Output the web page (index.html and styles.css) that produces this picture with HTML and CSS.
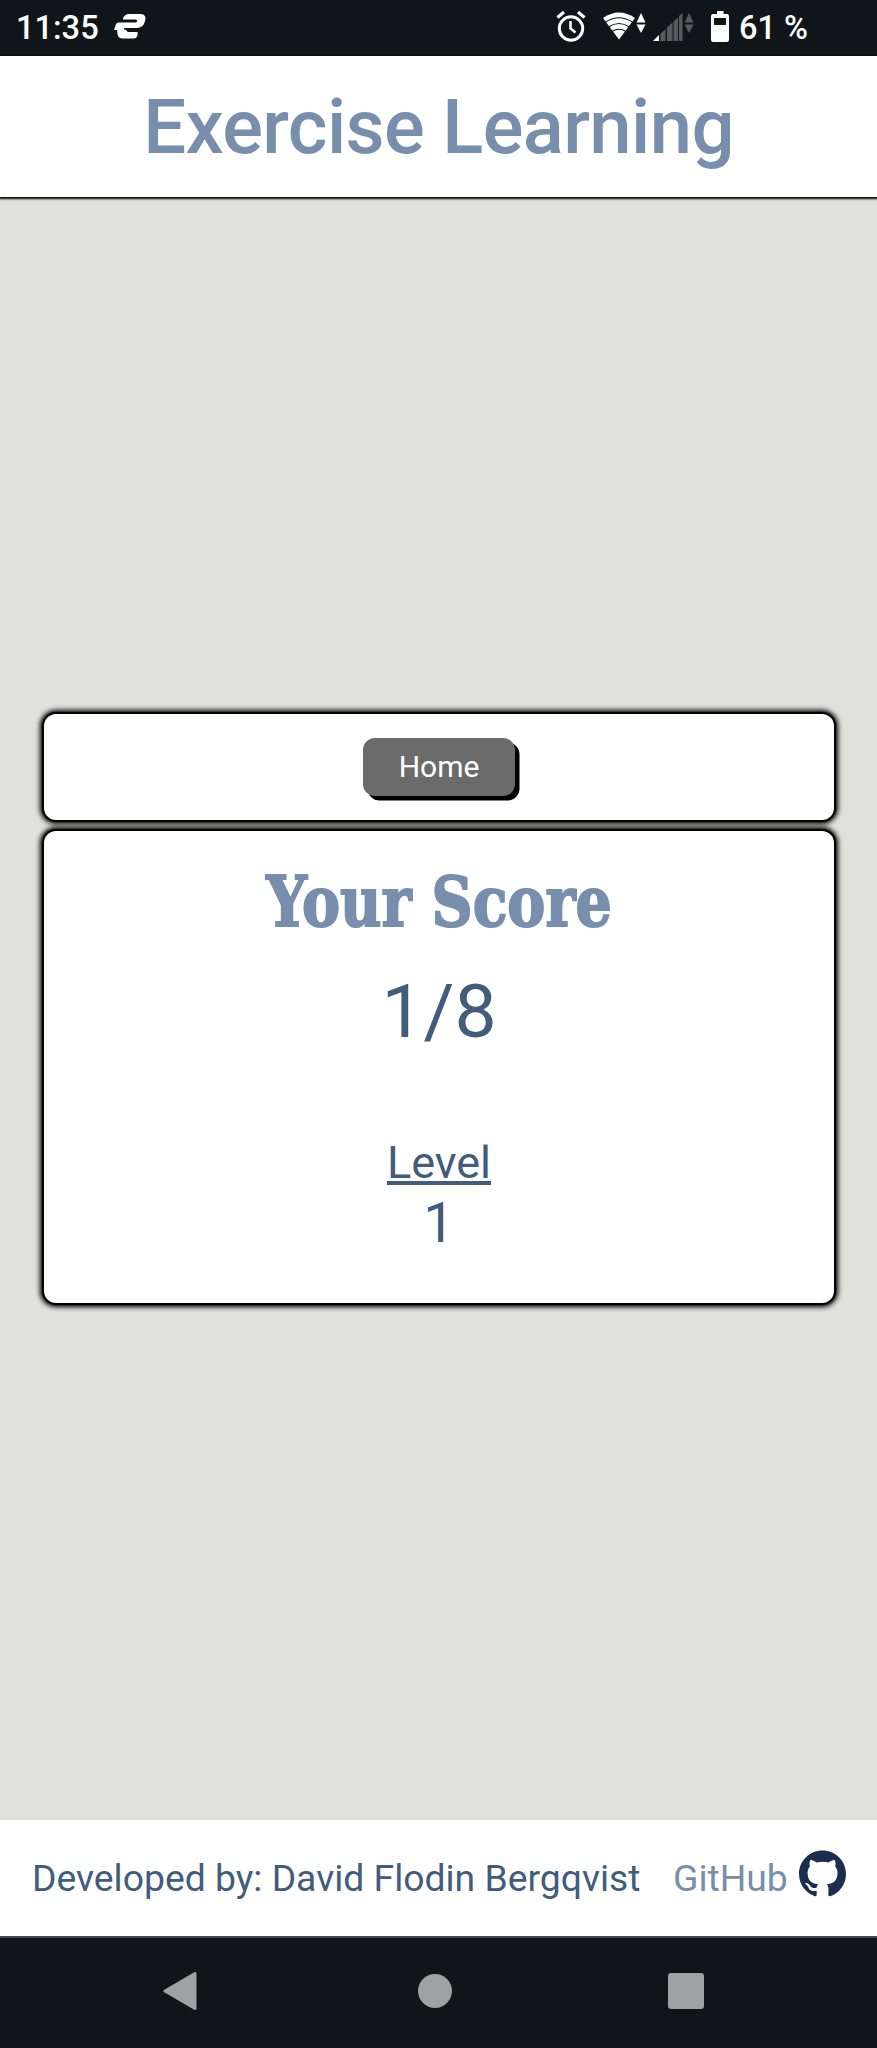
FILE: index.html
```html
<!DOCTYPE html>
<html lang="en">
<head>
<meta charset="utf-8">
<title>Exercise Learning</title>
<link rel="stylesheet" href="styles.css">
</head>
<body>
<div class="screen">
  <div class="status">
    <span class="clock">11:35</span>
    <svg class="vpn" width="32" height="26" viewBox="0 0 32 26" fill="#fff"><path d="M9 5.500Q10.500 1 15 1H26Q33 1 31 8Q29.500 15 23 15H12Q10 15 10 17H0L2 11Q2.600 9.500 5 9.500H21.500Q23 9.500 23 8Q23 6.600 21.500 6.600H9Z"/><path d="M3 16.500H12Q12.500 18.800 14 19H23.500Q24.300 21 23 23.500Q22.200 25.500 20 25.500H9Q4 25.500 3.500 21Z"/><path d="M9 7.800H22.500M10 15.800H23" stroke="#101519" stroke-width="1.300"/></svg>
    <svg class="alarm" width="30" height="32" viewBox="0 0 30 32" fill="none" stroke="#fff"><circle cx="15" cy="18.500" r="11.700" stroke-width="3"/><path d="M14.500 11V18.500L19.500 22.500" stroke-width="2.600"/><path d="M1.500 7.500L8 2M28.500 7.500L22 2" stroke-width="3.200"/></svg>
    <svg class="wifi" width="44" height="30" viewBox="0 0 44 30"><path d="M0 6Q16-5 32 6L16 27.500Z" fill="#fff"/><path d="M2 10.500Q16 1 30 10.500M5.500 15Q16 8 26.500 15M9 19.500Q16 15 23 19.500" fill="none" stroke="#101519" stroke-width="1.100"/><path d="M33.500 10.500L38 1L42.500 10.500ZM33.500 12.500H42.500L38 21Z" fill="#fff"/></svg>
    <svg class="signal" width="42" height="30" viewBox="0 0 42 30" fill="#57595c"><path d="M0 29L6 23V29Z" fill="#fff"/><path d="M7.300 22L12.500 17V29H7.300ZM14 15.500L19.500 10.500V29H14ZM20.500 9.500L25 5.500V29H20.500ZM26 4L29.500 .5V29H26ZM31.500 10.500L36 1L40.500 10.500ZM31.500 12.500H40.500L36 21Z"/></svg>
    <svg class="battery" width="18" height="31" viewBox="0 0 18 31" fill="#fff"><path d="M6 0H12.500V3H16Q18 3 18 5V29Q18 31 16 31H2Q0 31 0 29V5Q0 3 2 3H6Z"/><path d="M3 7H15V14H3Z" fill="#101519"/></svg>
    <span class="percent">61 %</span>
  </div>
  <header class="header"><h1 class="title">Exercise Learning</h1></header>
  <main class="main">
    <section class="card actions"><button class="home">Home</button></section>
    <section class="card result">
      <h2 class="heading"><span class="heading-text">Your Score</span></h2>
      <div class="score">1/8</div>
      <div class="level">Level</div>
      <div class="level-value">1</div>
    </section>
  </main>
  <footer class="footer">
    <span class="credit">Developed by: David Flodin Bergqvist</span>
    <a class="link">GitHub</a>
    <svg class="github" width="47" height="47" viewBox="0 0 16 15.700" fill="#1b2e50"><path d="M8 0C3.580 0 0 3.580 0 8c0 3.540 2.290 6.530 5.470 7.590.4.070.55-.17.55-.38 0-.19-.01-.82-.01-1.490-2.010.37-2.530-.49-2.690-.94-.09-.23-.48-.94-.82-1.130-.28-.15-.68-.52-.01-.53.63-.01 1.080.58 1.230.82.72 1.210 1.870.87 2.330.66.07-.52.28-.87.51-1.070-1.780-.2-3.640-.89-3.640-3.950 0-.87.31-1.590.82-2.150-.08-.2-.36-1.020.08-2.120 0 0 .67-.21 2.200.82.64-.18 1.320-.27 2-.27s1.360.09 2 .27c1.530-1.040 2.200-.82 2.200-.82.44 1.100.16 1.920.08 2.120.51.56.82 1.270.82 2.150 0 3.070-1.870 3.750-3.650 3.950.29.25.54.73.54 1.480 0 1.070-.01 1.930-.01 2.200 0 .21.15.46.55.38A8.010 8.010 0 0 0 16 8c0-4.420-3.580-8-8-8z"/></svg>
  </footer>
  <nav class="nav">
    <svg class="back" width="34" height="40" viewBox="0 0 34 40"><path d="M2 20L32 2.500V37.500Z" fill="#a0a1a3" stroke="#a0a1a3" stroke-width="3" stroke-linejoin="round"/></svg>
    <span class="circle"></span>
    <span class="square"></span>
  </nav>
</div>
</body>
</html>
```
FILE: styles.css
```css
* { box-sizing: border-box; }
body { margin: 0; font-family: Roboto, "Liberation Sans", sans-serif; color: #425c7c; }
.screen { width: 877px; height: 2048px; display: flex; flex-direction: column; background: #e0e1dc; overflow: hidden; }
.screen svg { display: block; flex: none; }
.status { flex: none; height: 56px; display: flex; align-items: flex-start; padding-left: 16px; background: #101519; color: #fff; font-weight: 500; white-space: nowrap; }
.clock { width: 98px; font-size: 32.6px; line-height: 56px; }
.vpn { margin-top: 13px; }
.alarm { margin: 10px 0 0 410px; }
.wifi { margin: 12px 0 0 17px; }
.signal { margin: 12px 0 0 6px; }
.battery { margin: 11px 0 0 16px; }
.percent { margin-left: 10px; font-size: 32.5px; line-height: 56px; }
.header { flex: none; height: 141px; display: flex; align-items: center; justify-content: center; background: #fff; box-shadow: 0 1px 2px 1px #000; }
.title { margin: 0; font-size: 76px; font-weight: 500; line-height: 100px; letter-spacing: -.65px; color: #778eac; white-space: nowrap; }
.main { flex: 1; display: flex; flex-direction: column; gap: 11px; padding: 517px 43px 0 44px; }
.card { border-radius: 12px; background: #fff; box-shadow: 0 0 1px 2px #000, 0 0 5px 4px #000; text-align: center; }
.actions { height: 106px; padding-top: 24px; }
.home { display: block; width: 152px; height: 58px; margin: 0 auto; padding: 0; border: 0; border-radius: 12px; background: #6b6b6b; box-shadow: 4.5px 4.5px 0 #000; color: #fff; font: 30px/58px Roboto, "Liberation Sans", sans-serif; }
.result { height: 472px; padding-top: 22px; }
.heading { display: flex; justify-content: center; margin: 0; font: bold 70px/98px "DejaVu Serif", serif; color: #778eac; white-space: nowrap; }
.heading-text { transform: scaleX(.815); -webkit-text-stroke: 2px #778eac; }
.score { margin-top: 16px; font-size: 75px; line-height: 88px; }
.level { margin-top: 78px; font-size: 45px; line-height: 60px; text-decoration: underline; text-decoration-thickness: 4px; text-underline-offset: 3px; }
.level-value { font-size: 56px; line-height: 60px; }
.footer { flex: none; height: 116px; display: flex; align-items: center; padding-left: 32px; background: #fff; font-size: 37.3px; white-space: nowrap; }
.credit { width: 641px; }
.link { width: 126px; color: #778eac; }
.github { margin-bottom: 9px; }
.nav { flex: none; height: 112px; display: flex; align-items: center; padding-left: 163px; border-top: 2px solid #45494d; background: #101519; }
.circle { width: 34px; height: 34px; margin-left: 221px; border-radius: 50%; background: #a0a1a3; }
.square { width: 36px; height: 36px; margin-left: 216px; border-radius: 3px; background: #a0a1a3; }
.back, .circle, .square { margin-bottom: 5px; }
```
